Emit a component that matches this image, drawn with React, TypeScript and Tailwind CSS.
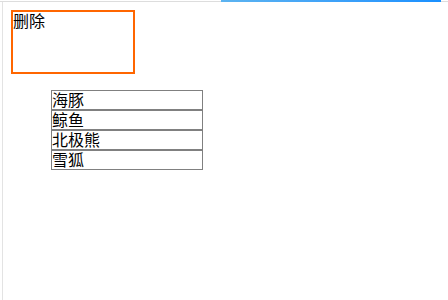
import React from "react";

const items = ["海豚", "鲸鱼", "北极熊", "雪狐"];

export default function App() {
  return (
    <div
      className="relative h-[300px] w-[448px] overflow-hidden bg-white text-black"
      style={{ fontFamily: '"Noto Sans CJK SC", "Noto Sans", sans-serif' }}
    >
      <div className="h-[2px] w-full border-b border-[#dddddd]" />
      <div className="absolute left-[221px] top-0 h-[2px] w-[220px] bg-gradient-to-r from-[#5cb3f0] to-[#1890ff]" />
      <div className="ml-[2px] h-[298px] border-l border-[#e3e3e3] pl-[8px] pt-[8px]">
        <div className="h-[64px] w-[124px] border-2 border-[#ff6600] text-[16px] leading-[17px]">
          删除
        </div>
        <ul className="my-[16px] list-none pl-[40px]">
          {items.map((t) => (
            <li
              key={t}
              className="h-[20px] w-[152px] border border-[#808080] text-[16px] leading-[17px]"
            >
              {t}
            </li>
          ))}
        </ul>
      </div>
    </div>
  );
}
